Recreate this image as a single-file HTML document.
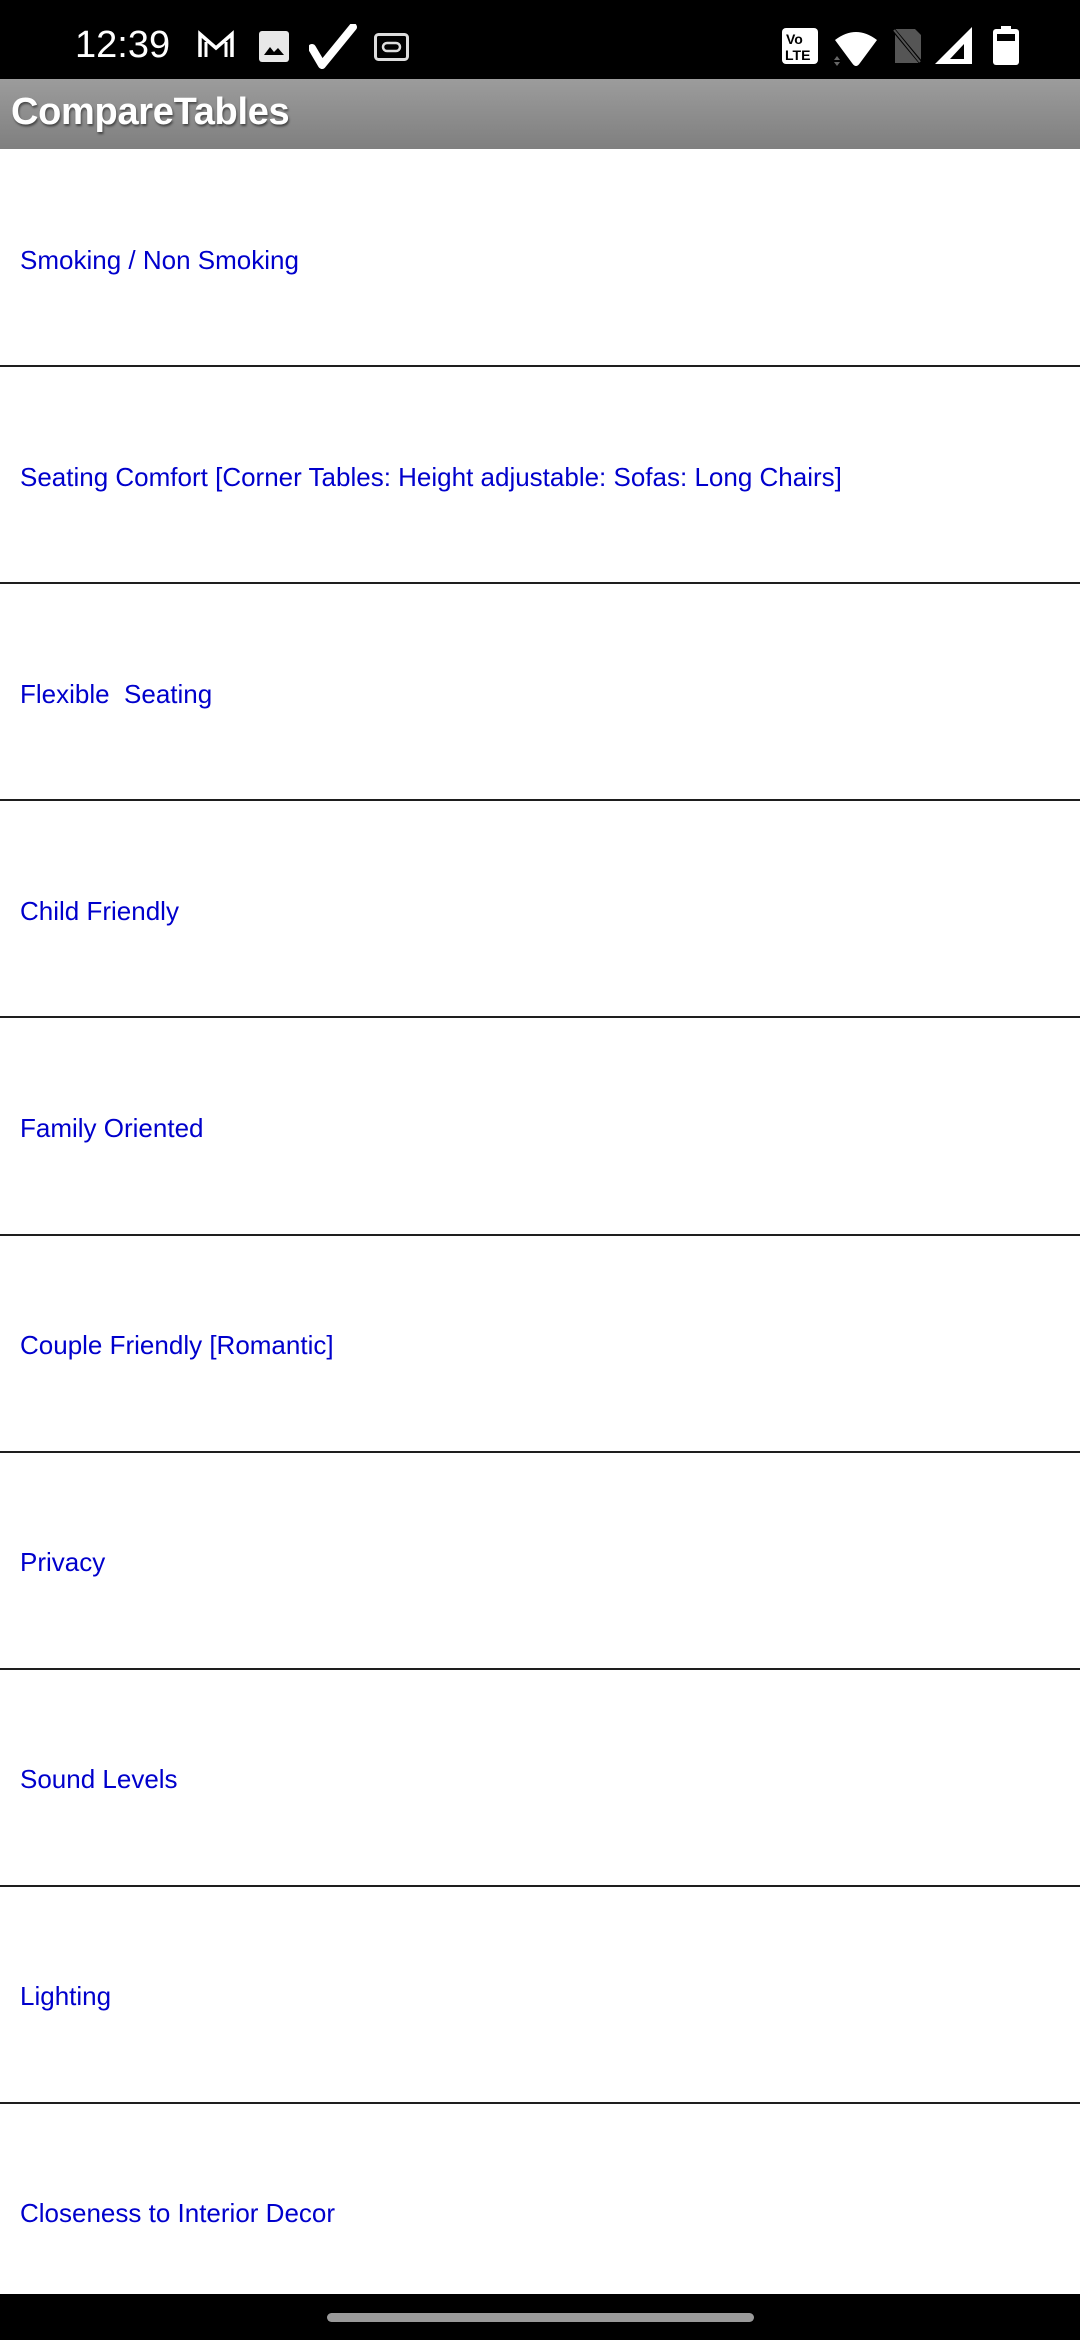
<!DOCTYPE html>
<html><head><meta charset="utf-8"><style>
*{margin:0;padding:0;box-sizing:border-box}
body{width:1080px;height:2340px;position:relative;background:#fff;overflow:hidden;font-family:"Liberation Sans",Arial,sans-serif}
.sb{position:absolute;left:0;top:0;width:1080px;height:79px;background:#000}
.tb{position:absolute;left:0;top:79px;width:1080px;height:70px;background:linear-gradient(#9c9c9c,#7f7f7f)}
.tb span{position:absolute;left:11px;top:12px;font-size:38px;font-weight:bold;color:#fff;text-shadow:1px 2px 2px rgba(0,0,0,.5);letter-spacing:-0.3px}
.row{position:absolute;left:20px;font-size:26px;color:#0000cc;line-height:32px}
.sep{position:absolute;left:0;width:1080px;height:2px;background:#1e1e1e}
.nav{position:absolute;left:0;top:2294px;width:1080px;height:46px;background:#000}
.pill{position:absolute;left:327px;top:2313px;width:427px;height:9px;border-radius:5px;background:#9a9a9a}
</style></head><body>
<div class="sb">
<div style="position:absolute;left:75px;top:26px;color:#fff;font-size:38px;line-height:38px">12:39</div>
<svg style="position:absolute;left:196px;top:30px" width="40" height="30" viewBox="0 0 40 30"><path d="M4 27V4l16 14L36 4v23" fill="none" stroke="#fff" stroke-width="3.5"/><path d="M10 27V12M30 27V12" stroke="#fff" stroke-width="3"/></svg>
<svg style="position:absolute;left:258px;top:30px" width="32" height="33" viewBox="0 0 32 33"><rect x="1" y="1" width="30" height="31" rx="3" fill="#e8e8e8"/><path d="M6 25l6-8 4 5 4-4 6 7z" fill="#000"/></svg>
<svg style="position:absolute;left:309px;top:24px" width="48" height="45" viewBox="0 0 48 45"><path d="M3 24l10 17L44 3" fill="none" stroke="#fff" stroke-width="8" stroke-linecap="round" stroke-linejoin="round"/></svg>
<svg style="position:absolute;left:374px;top:33px" width="35" height="28" viewBox="0 0 35 28"><rect x="1.5" y="1.5" width="32" height="25" rx="3" fill="none" stroke="#ddd" stroke-width="3"/><rect x="9" y="10" width="17" height="8" rx="4" fill="none" stroke="#ddd" stroke-width="2.5"/></svg>
<svg style="position:absolute;left:782px;top:28px" width="36" height="36" viewBox="0 0 36 36"><rect x="0" y="0" width="36" height="36" rx="4" fill="#fff"/><text x="4" y="16" font-size="14" font-weight="bold" font-family="Liberation Sans" fill="#000">Vo</text><text x="3" y="32" font-size="14" font-weight="bold" font-family="Liberation Sans" fill="#000">LTE</text></svg>
<svg style="position:absolute;left:832px;top:28px" width="48" height="38" viewBox="0 0 48 38"><path d="M3 12Q24 -4 45 12L28 35Q26 38 24 38Q22 38 20 35z" fill="#fff"/><path d="M2 32l3-4 3 4zM2 34l3 4 3-4z" fill="#666"/></svg>
<svg style="position:absolute;left:890px;top:26px" width="34" height="40" viewBox="0 0 34 40"><path d="M5 3h20l6 6v28H5z" fill="#555"/><path d="M2 2l30 36" stroke="#000" stroke-width="4"/><path d="M4 4l26 32" stroke="#555" stroke-width="2"/></svg>
<svg style="position:absolute;left:934px;top:26px" width="40" height="39" viewBox="0 0 40 39"><path d="M38 1V38H1z" fill="#fff"/><path d="M30 18V33H16z" fill="#000"/></svg>
<svg style="position:absolute;left:992px;top:26px" width="28" height="40" viewBox="0 0 28 40"><rect x="9" y="0" width="10" height="4" fill="#fff"/><rect x="1" y="3" width="26" height="36" rx="3" fill="#fff"/><rect x="5" y="8" width="18" height="7" fill="#000"/></svg>
</div>
<div class="tb"><span>CompareTables</span></div>

<div class="row" style="top:244px">Smoking / Non Smoking</div>
<div class="sep" style="top:365px"></div>
<div class="row" style="top:461px">Seating Comfort [Corner Tables: Height adjustable: Sofas: Long Chairs]</div>
<div class="sep" style="top:582px"></div>
<div class="row" style="top:678px">Flexible&nbsp; Seating</div>
<div class="sep" style="top:799px"></div>
<div class="row" style="top:895px">Child Friendly</div>
<div class="sep" style="top:1016px"></div>
<div class="row" style="top:1112px">Family Oriented</div>
<div class="sep" style="top:1234px"></div>
<div class="row" style="top:1329px">Couple Friendly [Romantic]</div>
<div class="sep" style="top:1451px"></div>
<div class="row" style="top:1546px">Privacy</div>
<div class="sep" style="top:1668px"></div>
<div class="row" style="top:1763px">Sound Levels</div>
<div class="sep" style="top:1885px"></div>
<div class="row" style="top:1980px">Lighting</div>
<div class="sep" style="top:2102px"></div>
<div class="row" style="top:2197px">Closeness to Interior Decor</div>

<div class="nav"></div>
<div class="pill"></div>
</body></html>
